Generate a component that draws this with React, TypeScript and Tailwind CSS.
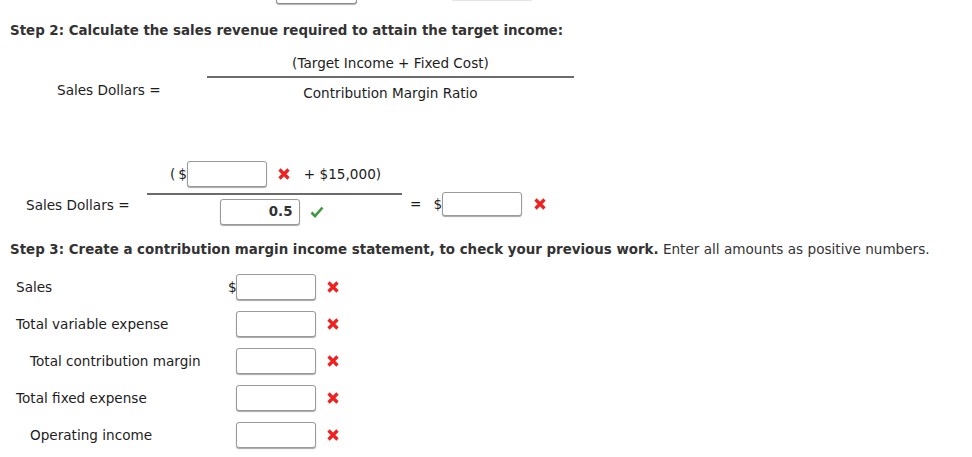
import React from "react";

const font = { fontFamily: '"DejaVu Sans", Verdana, sans-serif' };

function Cross() {
  return (
    <svg width="12" height="12" viewBox="0 0 12 12" className="shrink-0">
      <path d="M1.5 1.5 L10.5 10.5 M10.5 1.5 L1.5 10.5" stroke="#f21f1f" strokeWidth="3.2" strokeLinecap="butt" />
    </svg>
  );
}

function Check() {
  return (
    <svg width="14" height="12" viewBox="0 0 14 12" className="shrink-0">
      <path d="M1.5 6.5 L5 10 L12.5 1.5" stroke="#3c9a3c" strokeWidth="2.6" fill="none" />
    </svg>
  );
}

function Box({ value, h = "h-[26px]" }: { value?: string; h?: string }) {
  return (
    <div
      className={`w-[80px] ${h} shrink-0 rounded-[3px] border border-[#9a9a9a] bg-white shadow-[0_1px_1px_rgba(0,0,0,0.35)] flex items-center justify-end pr-[6px] text-[13.4px] font-bold text-[#333]`}
    >
      {value}
    </div>
  );
}

const rows = [
  { label: "Sales", indent: false, dollar: true },
  { label: "Total variable expense", indent: false, dollar: false },
  { label: "Total contribution margin", indent: true, dollar: false },
  { label: "Total fixed expense", indent: false, dollar: false },
  { label: "Operating income", indent: true, dollar: false },
];

export default function App() {
  return (
    <div className="w-[972px] h-[457px] overflow-hidden bg-white text-[13.6px] leading-[16px] text-[#1c1c1c]" style={font}>
      {/* bottoms of inputs from the previous step */}
      <div className="flex h-[5px]">
        <div className="ml-[276px] w-[81px] h-[4px] rounded-b-[3px] border-x border-b border-[#8a8a8a] shadow-[0_1px_1px_rgba(0,0,0,0.3)]" />
        <div className="ml-[95px] w-[80px] h-[1px] bg-[#e4e4e4]" />
      </div>

      <h2 className="mt-[18px] pl-[10px] text-[13.4px] font-bold text-[#333]">
        Step 2: Calculate the sales revenue required to attain the target income:
      </h2>

      {/* formula */}
      <div className="mt-[16px] flex">
        <div className="w-[207px] pl-[57px] pt-[27px]">Sales Dollars =</div>
        <div className="w-[367px] flex flex-col items-center">
          <div>(Target Income + Fixed Cost)</div>
          <div className="mt-[5px] w-full h-[2px] bg-[#6b6b6b]" />
          <div className="mt-[7px]">Contribution Margin Ratio</div>
        </div>
      </div>

      {/* worked formula */}
      <div className="mt-[60px] flex">
        <div className="w-[147px] pl-[26px] pt-[36px]">Sales Dollars =</div>
        <div className="w-[255px] flex flex-col items-center">
          <div className="flex items-center h-[26px] pl-[2px]">
            <span className="mr-[3px]">(</span>
            <span>$</span>
            <Box />
            <span className="ml-[11px]"><Cross /></span>
            <span className="ml-[14px]">+ $15,000)</span>
          </div>
          <div className="mt-[6px] w-full h-[2px] bg-[#6b6b6b]" />
          <div className="mt-[4px] flex items-center pr-[6px]">
            <Box value="0.5" />
            <span className="ml-[10px]"><Check /></span>
          </div>
        </div>
        <div className="pt-[31px] pl-[8px] flex items-start">
          <div className="flex items-center h-[24px]">
            <span>=</span>
            <span className="ml-[12px]">$</span>
            <Box h="h-[24px]" />
            <span className="ml-[12px]"><Cross /></span>
          </div>
        </div>
      </div>

      <p className="mt-[16px] pl-[10px]">
        <span className="font-bold text-[13.4px] text-[#333]">
          Step 3: Create a contribution margin income statement, to check your previous work.
        </span>{" "}
        <span className="text-[#333]">Enter all amounts as positive numbers.</span>
      </p>

      <div className="mt-[16px] flex flex-col gap-[11px]">
        {rows.map((r) => (
          <div key={r.label} className="flex items-center h-[26px]">
            <div className={`w-[228px] ${r.indent ? "pl-[30px]" : "pl-[16px]"}`}>{r.label}</div>
            <div className="w-[8px] text-right">{r.dollar ? "$" : ""}</div>
            <Box />
            <span className="ml-[11px]"><Cross /></span>
          </div>
        ))}
      </div>
    </div>
  );
}
